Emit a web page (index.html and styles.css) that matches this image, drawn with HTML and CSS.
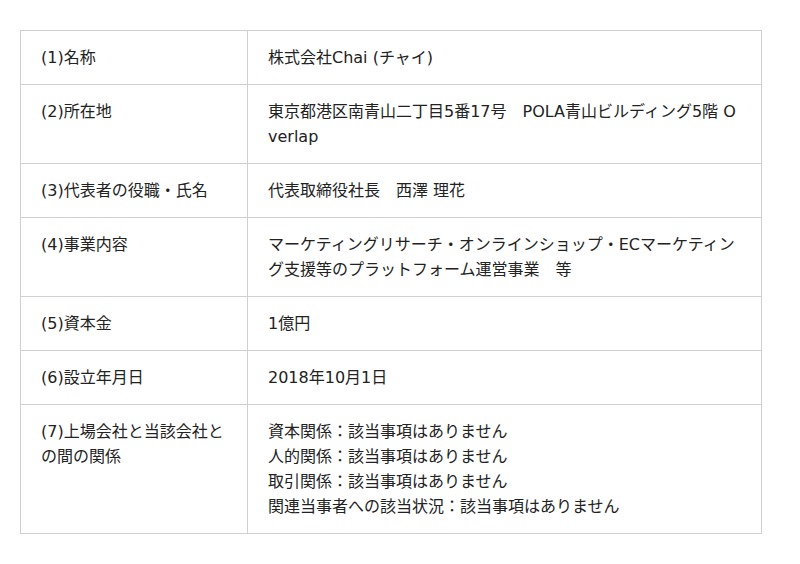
FILE: index.html
```html
<!DOCTYPE html>
<html lang="ja">
<head>
<meta charset="utf-8">
<link rel="stylesheet" href="styles.css">
</head>
<body>
<div class="wrap">
<table class="info">
<tr><th>(1)名称</th><td>株式会社Chai (チャイ)</td></tr>
<tr><th>(2)所在地</th><td>東京都港区南青山二丁目5番17号　POLA青山ビルディング5階 Overlap</td></tr>
<tr><th>(3)代表者の役職・氏名</th><td>代表取締役社長　西澤 理花</td></tr>
<tr><th>(4)事業内容</th><td>マーケティングリサーチ・オンラインショップ・ECマーケティング支援等のプラットフォーム運営事業　等</td></tr>
<tr><th>(5)資本金</th><td>1億円</td></tr>
<tr><th>(6)設立年月日</th><td>2018年10月1日</td></tr>
<tr><th>(7)上場会社と当該会社との間の関係</th><td>資本関係：該当事項はありません<br>人的関係：該当事項はありません<br>取引関係：該当事項はありません<br>関連当事者への該当状況：該当事項はありません</td></tr>
</table>
</div>
</body>
</html>
```
FILE: styles.css
```css
html, body {
  margin: 0;
  padding: 0;
  background: #fff;
}
.wrap {
  padding: 30px 38px 0 20px;
}
.info {
  width: 742px;
  border-collapse: collapse;
  font-family: "DejaVu Sans", "Noto Sans CJK JP", sans-serif;
  font-size: 16px;
  line-height: 25px;
  color: #222;
}
.info th, .info td {
  border: 1px solid #d0d0d0;
  padding: 14px 20px;
  text-align: left;
  vertical-align: top;
  font-weight: normal;
  word-break: break-all;
}
.info th {
  width: 186px;
}
```
